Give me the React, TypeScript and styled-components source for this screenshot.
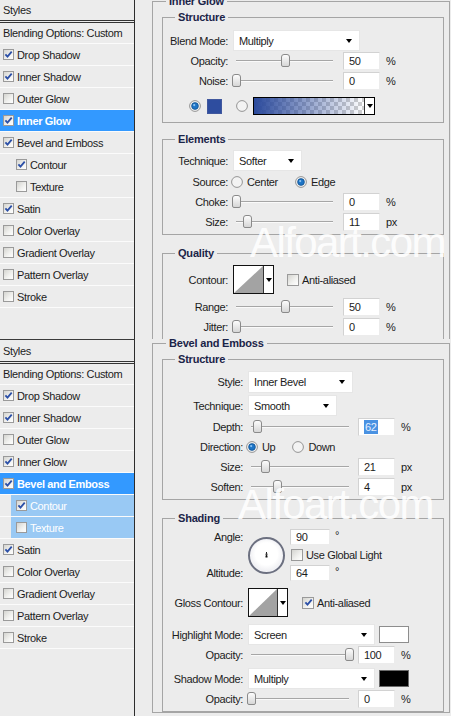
import React from 'react'
import styled, { createGlobalStyle } from 'styled-components'

const GlobalStyle = createGlobalStyle`
  html, body { margin: 0; padding: 0; background: #ececec; }
  body {
    font-family: "Liberation Sans", Arial, sans-serif;
    font-size: 11px;
    letter-spacing: -0.35px;
    color: #1c1c1c;
  }
`

type StyleItem = { name: string; on: boolean; sub?: boolean }

const styleItems: StyleItem[] = [
  { name: 'Drop Shadow', on: true },
  { name: 'Inner Shadow', on: true },
  { name: 'Outer Glow', on: false },
  { name: 'Inner Glow', on: true },
  { name: 'Bevel and Emboss', on: true },
  { name: 'Contour', on: true, sub: true },
  { name: 'Texture', on: false, sub: true },
  { name: 'Satin', on: true },
  { name: 'Color Overlay', on: false },
  { name: 'Gradient Overlay', on: false },
  { name: 'Pattern Overlay', on: false },
  { name: 'Stroke', on: false },
]

const Page = styled.div`
  position: relative;
  width: 451px;
  height: 716px;
  overflow: hidden;
  background: #ececec;
`

const Shot = styled.div<{ $h: number; $mt?: number; $clip?: boolean }>`
  display: flex;
  height: ${p => p.$h}px;
  margin-top: ${p => p.$mt ?? 0}px;
  overflow: ${p => (p.$clip ? 'hidden' : 'visible')};
`

/* ---------- left: styles list ---------- */

const StylesPanel = styled.div`
  flex: none;
  width: 134px;
  border-top: 1px solid #3a3a3a;
  border-right: 1px solid #2c2c2c;
`

const PanelHead = styled.div`
  display: flex;
  align-items: center;
  height: 21px;
  padding-left: 3px;
  border-bottom: 3px double #333;
`

const BlendRow = styled.div`
  display: flex;
  align-items: center;
  height: 20px;
  padding-left: 3px;
  border-bottom: 1px solid #fbfbfb;
`

const StyleRow = styled.div<{ $sub?: boolean; $tone?: 'active' | 'soft' }>`
  display: flex;
  align-items: center;
  gap: 3px;
  height: 21px;
  padding-left: ${p => (p.$sub ? 16 : 3)}px;
  border-bottom: 1px solid #fbfbfb;
  background: ${p =>
    p.$tone === 'active'
      ? '#3399ff'
      : p.$tone === 'soft'
      ? 'linear-gradient(to right, transparent 11px, #99c9f4 11px)'
      : 'transparent'};
  color: ${p => (p.$tone ? '#fff' : '#1c1c1c')};
  font-weight: ${p => (p.$tone === 'active' ? 700 : 400)};
`

const CheckBox = styled.span<{ $s: number }>`
  flex: none;
  display: inline-flex;
  align-items: center;
  justify-content: center;
  box-sizing: border-box;
  width: ${p => p.$s}px;
  height: ${p => p.$s}px;
  border: 1px solid #9a9a9a;
  background: linear-gradient(135deg, #d4d4d0 0%, #f2f2f0 60%, #fff 100%);
`

const Check = ({ on, size = 11 }: { on: boolean; size?: number }) => (
  <CheckBox $s={size}>
    {on && (
      <svg width="9" height="9" viewBox="0 0 9 9">
        <path d="M1.4 4.3 L3.5 6.6 L7.7 1.7" fill="none" stroke="#2b4fa7" strokeWidth="1.8" />
      </svg>
    )}
  </CheckBox>
)

const StylesList = ({ active, soft = [] }: { active: string; soft?: string[] }) => (
  <StylesPanel>
    <PanelHead>Styles</PanelHead>
    <BlendRow>Blending Options: Custom</BlendRow>
    {styleItems.map(item => (
      <StyleRow
        key={item.name}
        $sub={item.sub}
        $tone={item.name === active ? 'active' : soft.includes(item.name) ? 'soft' : undefined}
      >
        <Check on={item.on} />
        {item.name}
      </StyleRow>
    ))}
  </StylesPanel>
)

/* ---------- right: option groups ---------- */

const Options = styled.div`
  flex: 1;
  min-width: 0;
`

const Outer = styled.fieldset<{ $mt: number }>`
  margin: ${p => p.$mt}px 1px 0 17px;
  padding: 4px 5px 0 9px;
  min-width: 0;
  border: 1px solid #a5a5a5;
`

const OuterLegend = styled.legend`
  margin-left: 4px;
  padding: 0 3px;
  font-weight: 700;
  line-height: 12px;
  letter-spacing: -0.2px;
  color: #1b2448;
`

const Group = styled.fieldset<{ $lw: number; $mt?: number; $pt?: number; $pb?: number }>`
  --lw: ${p => p.$lw}px;
  margin: ${p => p.$mt ?? 0}px 0 0;
  padding: ${p => p.$pt ?? 0}px 0 ${p => p.$pb ?? 0}px;
  min-width: 0;
  border: 1px solid #a5a5a5;
`

const Legend = styled.legend`
  margin-left: 12px;
  padding: 0 3px;
  font-weight: 700;
  line-height: 12px;
  letter-spacing: -0.2px;
  color: #1b2448;
`

const Field = styled.div<{ $h?: number; $mt?: number; $pl?: number }>`
  display: flex;
  align-items: center;
  height: ${p => p.$h ?? 20}px;
  margin-top: ${p => p.$mt ?? 0}px;
  padding-left: ${p => p.$pl ?? 0}px;
  white-space: nowrap;
`

const Label = styled.span`
  flex: none;
  width: var(--lw);
  margin-right: 5px;
  text-align: right;
  white-space: nowrap;
`

const Caret = styled.span`
  flex: none;
  width: 0;
  height: 0;
  border-left: 3px solid transparent;
  border-right: 3px solid transparent;
  border-top: 4px solid #000;
`

const Select = styled.div<{ $w: number }>`
  flex: none;
  align-self: stretch;
  display: flex;
  align-items: center;
  justify-content: space-between;
  box-sizing: border-box;
  width: ${p => p.$w}px;
  padding: 0 7px 0 5px;
  background: #fff;
  border: 1px solid #e6e6e6;
`

const Track = styled.div<{ $w: number }>`
  position: relative;
  flex: none;
  width: ${p => p.$w}px;
  height: 14px;
  margin: 0 ${p => 107 - p.$w}px 0 3px;
  &::before {
    content: '';
    position: absolute;
    left: 0;
    right: 0;
    top: 6px;
    height: 1px;
    background: #a6a6a6;
    box-shadow: 0 1px 0 #fafafa;
  }
`

const Thumb = styled.span`
  position: absolute;
  top: 0;
  width: 7px;
  height: 11px;
  margin-left: -4px;
  border: 1px solid #8a8a8a;
  border-radius: 3px 3px 2px 2px;
  background: linear-gradient(#fdfdfd, #d6d6d6);
`

const NumBox = styled.span<{ $w?: number; $h?: number }>`
  flex: none;
  display: flex;
  align-items: center;
  box-sizing: border-box;
  width: ${p => p.$w ?? 37}px;
  height: ${p => p.$h ?? 18}px;
  padding-left: 5px;
  background: #fff;
  border: 1px solid #ececec;
  border-top-color: #d2d2d2;
  border-left-color: #d2d2d2;
`

const Picked = styled.span`
  padding: 1px 1px;
  background: #4a92e2;
  color: #e6efff;
`

const Unit = styled.span`
  margin-left: 6px;
`

const Deg = styled.span`
  align-self: flex-start;
  margin-left: 5px;
`

const RadioSvg = styled.svg`
  flex: none;
`

const Radio = ({ on }: { on?: boolean }) => (
  <RadioSvg width="12" height="12" viewBox="0 0 12 12">
    <circle cx="6" cy="6" r="5.4" fill="#f3f3f3" stroke="#949494" strokeWidth="1" />
    {on && (
      <>
        <circle cx="6" cy="6" r="3.4" fill="#1d74c6" stroke="#0f4a85" strokeWidth="0.7" />
        <circle cx="5.2" cy="5.1" r="1.1" fill="#8cc4f2" />
      </>
    )}
  </RadioSvg>
)

const Choices = styled.div`
  display: flex;
  align-items: center;
  margin-left: -2px;
`

const Choice = styled.span`
  display: flex;
  align-items: center;
  gap: 4px;
  margin-right: 17px;
`

const Swatch = styled.span<{ $c: string; $w: number; $h: number; $edge: string; $ml: number }>`
  flex: none;
  box-sizing: border-box;
  width: ${p => p.$w}px;
  height: ${p => p.$h}px;
  margin-left: ${p => p.$ml}px;
  background: ${p => p.$c};
  border: 1px solid ${p => p.$edge};
`

const GradientPick = styled.div`
  flex: none;
  display: flex;
  box-sizing: border-box;
  width: 122px;
  height: 18px;
  margin-left: 5px;
  border: 1px solid #000;
`

const GradientFill = styled.div`
  flex: 1;
  background-image: linear-gradient(to right, #2b4a9c 0%, rgba(43, 74, 156, 0.55) 45%, rgba(43, 74, 156, 0) 100%),
    conic-gradient(#cfcfcf 0 25%, #fff 0 50%, #cfcfcf 0 75%, #fff 0);
  background-size: 100% 100%, 8px 8px;
`

const PickCaret = styled.div`
  flex: none;
  display: flex;
  align-items: center;
  justify-content: center;
  width: 9px;
  background: #fff;
  border-left: 1px solid #333;
`

const ContourPick = styled.div<{ $w: number }>`
  flex: none;
  display: flex;
  box-sizing: border-box;
  width: ${p => p.$w}px;
  height: 29px;
  background: #fff;
  border: 1px solid #111;
`

const ContourSvg = styled.svg`
  flex: 1;
  height: 100%;
`

const Contour = ({ w }: { w: number }) => (
  <ContourPick $w={w}>
    <ContourSvg viewBox="0 0 30 27" preserveAspectRatio="none">
      <polygon points="0,27 30,0 30,27" fill="#a3a3a3" />
    </ContourSvg>
    <PickCaret>
      <Caret />
    </PickCaret>
  </ContourPick>
)

const Toggle = styled.span<{ $ml: number }>`
  display: flex;
  align-items: center;
  gap: 3px;
  margin-left: ${p => p.$ml}px;
`

const AngleGrid = styled.div`
  display: grid;
  grid-template-columns: var(--lw) 37px 1fr;
  grid-template-rows: repeat(3, 18px);
  column-gap: 5px;
  align-items: center;
`

const GridLabel = styled.span<{ $row: number }>`
  grid-column: 1;
  grid-row: ${p => p.$row};
  text-align: right;
`

const GridCell = styled.div<{ $row: number }>`
  grid-column: 3;
  grid-row: ${p => p.$row};
  display: flex;
  align-items: center;
`

const DialCell = styled.div`
  grid-column: 2;
  grid-row: 1 / 4;
  display: flex;
  align-items: center;
  justify-content: center;
`

const Dial = styled.div`
  display: flex;
  align-items: center;
  justify-content: center;
  box-sizing: border-box;
  width: 37px;
  height: 37px;
  border-radius: 50%;
  border: 2px solid #6c7080;
  background: radial-gradient(circle at 50% 45%, #ffffff 45%, #dcdde4 100%);
  box-shadow: inset 0 0 0 1px #f4f4f8;
`

const Watermark = styled.div<{ $x: number; $y: number }>`
  position: absolute;
  left: ${p => p.$x}px;
  top: ${p => p.$y}px;
  font-size: 42px;
  line-height: 42px;
  letter-spacing: -1.6px;
  color: rgba(255, 255, 255, 0.9);
  white-space: nowrap;
  pointer-events: none;
`

type SliderProps = {
  label: string
  value: React.ReactNode
  unit: string
  pos: number
  w: number
  mt?: number
}

const SliderRow = ({ label, value, unit, pos, w, mt }: SliderProps) => (
  <Field $mt={mt}>
    <Label>{label}</Label>
    <Track $w={w}>
      <Thumb style={{ left: `${pos * 100}%` }} />
    </Track>
    <NumBox>{value}</NumBox>
    <Unit>{unit}</Unit>
  </Field>
)

const InnerGlowOptions = () => (
  <Options>
    <Outer $mt={-3}>
      <OuterLegend>Inner Glow</OuterLegend>
      <Group $lw={65} $pt={7} $pb={7}>
        <Legend>Structure</Legend>
        <Field $h={21}>
          <Label>Blend Mode:</Label>
          <Select $w={127}>
            Multiply
            <Caret />
          </Select>
        </Field>
        <SliderRow label="Opacity:" value="50" unit="%" pos={0.5} w={97} />
        <SliderRow label="Noise:" value="0" unit="%" pos={0} w={97} />
        <Field $h={18} $mt={6} $pl={26}>
          <Radio on />
          <Swatch $c="#2e4d9f" $w={15} $h={15} $edge="#41589e" $ml={6} />
          <Toggle $ml={14}>
            <Radio />
          </Toggle>
          <GradientPick>
            <GradientFill />
            <PickCaret>
              <Caret />
            </PickCaret>
          </GradientPick>
        </Field>
      </Group>

      <Group $lw={65} $mt={10} $pt={5} $pb={2}>
        <Legend>Elements</Legend>
        <Field $h={21}>
          <Label>Technique:</Label>
          <Select $w={69}>
            Softer
            <Caret />
          </Select>
        </Field>
        <Field $mt={1}>
          <Label>Source:</Label>
          <Choices>
            <Choice>
              <Radio />
              Center
            </Choice>
            <Choice>
              <Radio on />
              Edge
            </Choice>
          </Choices>
        </Field>
        <SliderRow label="Choke:" value="0" unit="%" pos={0} w={97} />
        <SliderRow label="Size:" value="11" unit="px" pos={0.11} w={97} />
      </Group>

      <Group $lw={65} $mt={12} $pt={6} $pb={8}>
        <Legend>Quality</Legend>
        <Field $h={29}>
          <Label>Contour:</Label>
          <Contour w={41} />
          <Toggle $ml={13}>
            <Check on={false} size={12} />
            Anti-aliased
          </Toggle>
        </Field>
        <SliderRow label="Range:" value="50" unit="%" pos={0.5} w={97} mt={3} />
        <SliderRow label="Jitter:" value="0" unit="%" pos={0} w={97} />
      </Group>
    </Outer>
  </Options>
)

const BevelOptions = () => (
  <Options>
    <Outer $mt={-2}>
      <OuterLegend>Bevel and Emboss</OuterLegend>
      <Group $lw={80} $pt={6} $pb={2}>
        <Legend>Structure</Legend>
        <Field $h={22}>
          <Label>Style:</Label>
          <Select $w={105}>
            Inner Bevel
            <Caret />
          </Select>
        </Field>
        <Field $h={21} $mt={2}>
          <Label>Technique:</Label>
          <Select $w={89}>
            Smooth
            <Caret />
          </Select>
        </Field>
        <SliderRow label="Depth:" value={<Picked>62</Picked>} unit="%" pos={0.06} w={98} mt={1} />
        <Field>
          <Label>Direction:</Label>
          <Choices>
            <Choice>
              <Radio on />
              Up
            </Choice>
            <Choice>
              <Radio />
              Down
            </Choice>
          </Choices>
        </Field>
        <SliderRow label="Size:" value="21" unit="px" pos={0.14} w={98} />
        <SliderRow label="Soften:" value="4" unit="px" pos={0.265} w={98} />
      </Group>

      <Group $lw={80} $mt={12} $pt={4} $pb={2}>
        <Legend>Shading</Legend>
        <AngleGrid>
          <GridLabel $row={1}>Angle:</GridLabel>
          <DialCell>
            <Dial>
              <svg width="9" height="9" viewBox="0 0 9 9">
                <path d="M4.5 1 V5" stroke="#222" strokeWidth="1" />
                <path d="M3 3.2 H6" stroke="#555" strokeWidth="0.8" />
                <rect x="3.5" y="4.5" width="2" height="2" fill="#111" />
              </svg>
            </Dial>
          </DialCell>
          <GridCell $row={1}>
            <NumBox $w={40} $h={16}>90</NumBox>
            <Deg>°</Deg>
          </GridCell>
          <GridCell $row={2}>
            <Toggle $ml={1}>
              <Check on={false} size={12} />
              Use Global Light
            </Toggle>
          </GridCell>
          <GridLabel $row={3}>Altitude:</GridLabel>
          <GridCell $row={3}>
            <NumBox $w={40} $h={16}>64</NumBox>
            <Deg>°</Deg>
          </GridCell>
        </AngleGrid>
        <Field $h={29} $mt={6}>
          <Label>Gloss Contour:</Label>
          <Contour w={40} />
          <Toggle $ml={14}>
            <Check on size={12} />
            Anti-aliased
          </Toggle>
        </Field>
        <Field $h={21} $mt={7}>
          <Label>Highlight Mode:</Label>
          <Select $w={127}>
            Screen
            <Caret />
          </Select>
          <Swatch $c="#ffffff" $w={30} $h={17} $edge="#8d8d8d" $ml={4} />
        </Field>
        <SliderRow label="Opacity:" value="100" unit="%" pos={1} w={98} />
        <Field $h={21} $mt={3}>
          <Label>Shadow Mode:</Label>
          <Select $w={127}>
            Multiply
            <Caret />
          </Select>
          <Swatch $c="#000000" $w={30} $h={17} $edge="#6a6a6a" $ml={4} />
        </Field>
        <SliderRow label="Opacity:" value="0" unit="%" pos={0} w={98} />
      </Group>
    </Outer>
  </Options>
)

export default function App() {
  return (
    <>
      <GlobalStyle />
      <Page>
        <Shot $h={341} $mt={-2} $clip>
          <StylesList active="Inner Glow" />
          <InnerGlowOptions />
        </Shot>
        <Shot $h={377}>
          <StylesList active="Bevel and Emboss" soft={['Contour', 'Texture']} />
          <BevelOptions />
        </Shot>
        <Watermark $x={250} $y={222}>Alfoart.com</Watermark>
        <Watermark $x={238} $y={484}>Alfoart.com</Watermark>
      </Page>
    </>
  )
}
